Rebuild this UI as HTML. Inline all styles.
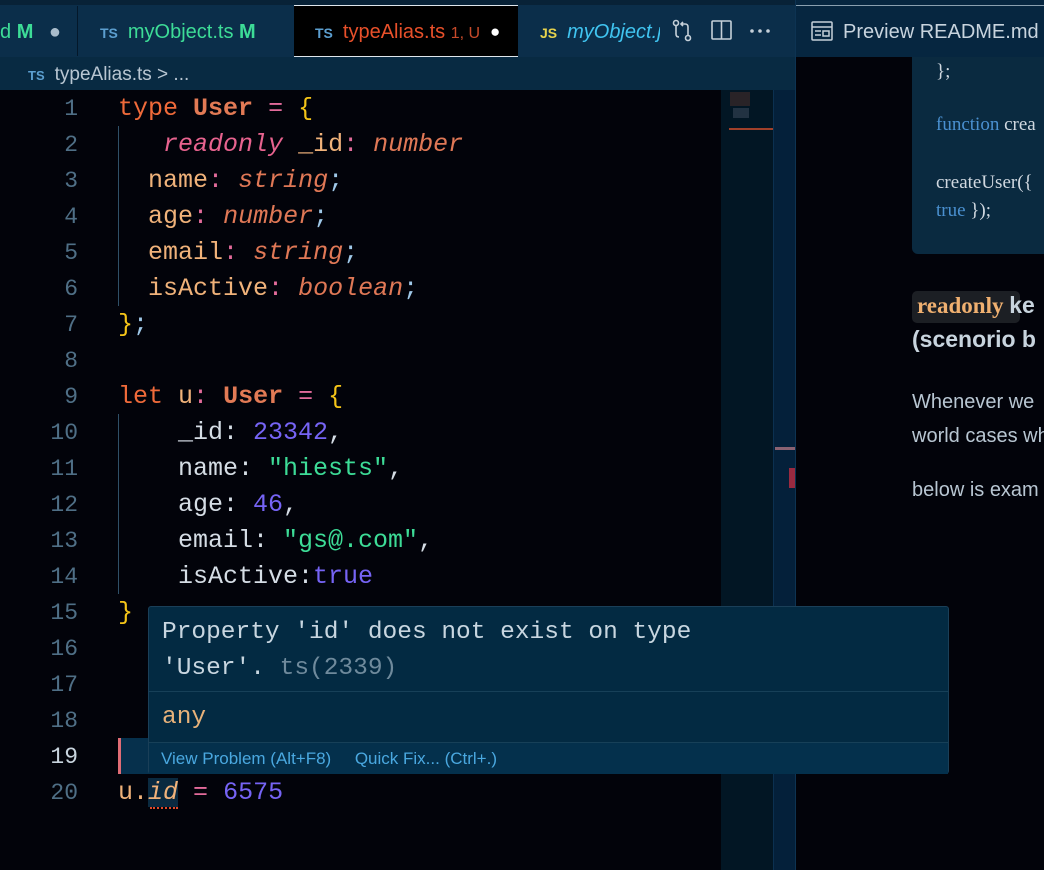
<!DOCTYPE html>
<html><head><meta charset="utf-8"><style>
*{margin:0;padding:0;box-sizing:border-box}
body{width:1044px;height:870px;overflow:hidden;background:#02030a;position:relative;font-family:"Liberation Sans",sans-serif}
.abs{position:absolute}
.code{font-family:"Liberation Mono",monospace;font-size:25px;white-space:pre;position:absolute;left:118px;height:36px;line-height:38px}
.ln{font-family:"Liberation Mono",monospace;font-size:23px;position:absolute;left:30px;width:48px;text-align:right;color:#4f6f86;line-height:38px}
.k{color:#ef6a3a}.t{color:#e27a55;font-weight:bold}.o{color:#e36b9b}.b{color:#f5c518}.p{color:#f0b27a}.ty{color:#e07856;font-style:italic}.w{color:#d5dde5}.n{color:#7664f5}.s{color:#3ddc97}.ro{color:#e8638f;font-style:italic}.sc{color:#9fc8e8}
.tab{position:absolute;top:6px;height:50px;line-height:52px;font-size:20px}
.tsi{font-size:14px;font-weight:bold;color:#5c9fd0;margin-right:10px}
</style></head><body>
<div class="abs" style="left:0;top:0;width:796px;height:57px;background:#0b2e4a"></div>
<div class="abs" style="left:0;top:0;width:796px;height:5px;background:#082237"></div>
<div class="tab" style="left:0;color:#3ddc97">d <b>M</b> <span style="color:#a9bccb;margin-left:10px">●</span></div>
<div class="abs" style="left:77px;top:6px;width:1px;height:50px;background:#04182a"></div>
<div class="tab" style="left:100px;color:#3ddc97"><span class="tsi">TS</span>myObject.ts <b>M</b></div>
<div class="abs" style="left:294px;top:5px;width:224px;height:52px;background:#000;border-top:1px solid #dfe6ec;border-bottom:1px solid #dfe6ec"></div>
<div class="tab" style="left:315px;color:#e8502a"><span class="tsi">TS</span>typeAlias.ts <span style="font-size:16px;color:#c84a2a">1, U</span></div>
<div class="tab" style="left:490px;color:#fff;font-size:17px">●</div>
<div class="tab" style="left:540px;color:#40c4f0;font-style:italic;width:120px;overflow:hidden;white-space:nowrap"><span style="font-size:14px;font-weight:bold;color:#e8d44d;font-style:normal;margin-right:10px">JS</span>myObject.js</div>
<svg class="abs" style="left:670px;top:18px" width="100" height="26" viewBox="0 0 100 26" fill="none" stroke="#c5d0d9" stroke-width="1.6">
<circle cx="6" cy="5" r="2.5"/><circle cx="18" cy="20" r="2.5"/><path d="M6 8v8c0 2 1 3 3 3"/><path d="M18 17V9c0-2-1-3-3-3h-4M13 4l-2 2 2 2"/>
<rect x="42" y="3" width="19" height="18" rx="1"/><path d="M51.5 3v18"/>
<circle cx="82" cy="13" r="1" fill="#c5d0d9"/><circle cx="90" cy="13" r="1" fill="#c5d0d9"/><circle cx="98" cy="13" r="1" fill="#c5d0d9"/>
</svg>
<div class="abs" style="left:0;top:57px;width:796px;height:33px;background:#082a42;color:#b8c6d2;font-size:19px;line-height:35px;padding-left:28px"><span class="tsi" style="font-size:13px">TS</span>typeAlias.ts &gt; ...</div>
<div class="abs" style="left:721px;top:90px;width:52px;height:780px;background:#021624"></div>
<div class="abs" style="left:773px;top:90px;width:22px;height:780px;background:#04203a;border-left:1px solid #0b3050"></div>
<div class="abs" style="left:729px;top:128px;width:44px;height:2px;background:#a0402a"></div>
<div class="abs" style="left:730px;top:92px;width:20px;height:14px;background:#3a2a2a;opacity:.7"></div>
<div class="abs" style="left:733px;top:108px;width:16px;height:10px;background:#2a3a4a;opacity:.8"></div>
<div class="abs" style="left:775px;top:447px;width:20px;height:3px;background:#8a6272"></div>
<div class="abs" style="left:789px;top:468px;width:6px;height:20px;background:#9a2a40"></div>
<div class="abs" style="left:795px;top:0;width:1px;height:870px;background:#0d3352"></div>
<div class="abs" style="left:118px;top:126px;width:1px;height:180px;background:#2f5068"></div>
<div class="abs" style="left:118px;top:414px;width:1px;height:180px;background:#2f5068"></div>
<div class="abs" style="left:118px;top:738px;width:603px;height:36px;background:#06304c;border-left:3px solid #e06c75"></div>
<div class="ln" style="top:90px">1</div><div class="ln" style="top:126px">2</div><div class="ln" style="top:162px">3</div><div class="ln" style="top:198px">4</div><div class="ln" style="top:234px">5</div><div class="ln" style="top:270px">6</div><div class="ln" style="top:306px">7</div><div class="ln" style="top:342px">8</div><div class="ln" style="top:378px">9</div><div class="ln" style="top:414px">10</div><div class="ln" style="top:450px">11</div><div class="ln" style="top:486px">12</div><div class="ln" style="top:522px">13</div><div class="ln" style="top:558px">14</div><div class="ln" style="top:594px">15</div><div class="ln" style="top:630px">16</div><div class="ln" style="top:666px">17</div><div class="ln" style="top:702px">18</div><div class="ln" style="top:738px;color:#c8d4de">19</div><div class="ln" style="top:774px">20</div>
<div class="code" style="top:90px"><span class="k">type</span> <span class="t">User</span> <span class="o">=</span> <span class="b">{</span></div>
<div class="code" style="top:126px">   <span class="ro">readonly</span> <span class="p">_id</span><span class="o">:</span> <span class="ty">number</span></div>
<div class="code" style="top:162px">  <span class="p">name</span><span class="o">:</span> <span class="ty">string</span><span class="sc">;</span></div>
<div class="code" style="top:198px">  <span class="p">age</span><span class="o">:</span> <span class="ty">number</span><span class="sc">;</span></div>
<div class="code" style="top:234px">  <span class="p">email</span><span class="o">:</span> <span class="ty">string</span><span class="sc">;</span></div>
<div class="code" style="top:270px">  <span class="p">isActive</span><span class="o">:</span> <span class="ty">boolean</span><span class="sc">;</span></div>
<div class="code" style="top:306px"><span class="b">}</span><span class="sc">;</span></div>
<div class="code" style="top:378px"><span class="k">let</span> <span class="p">u</span><span class="o">:</span> <span class="t">User</span> <span class="o">=</span> <span class="b">{</span></div>
<div class="code w" style="top:414px">    _id: <span class="n">23342</span>,</div>
<div class="code w" style="top:450px">    name: <span class="s">"hiests"</span>,</div>
<div class="code w" style="top:486px">    age: <span class="n">46</span>,</div>
<div class="code w" style="top:522px">    email: <span class="s">"gs@.com"</span>,</div>
<div class="code w" style="top:558px">    isActive:<span class="n">true</span></div>
<div class="code" style="top:594px"><span class="b">}</span></div>
<div class="code" style="top:774px"><span class="p">u.</span><span class="p" style="font-style:italic;background:#0a2a40">id</span> <span class="o">=</span> <span class="n">6575</span></div>
<div class="abs" style="left:150px;top:807px;width:28px;height:3px;border-top:2px dotted #e04a2a"></div>
<div class="abs" style="left:148px;top:606px;width:801px;height:168px;background:#032a42;border:1px solid #1a3f58;border-radius:3px">
<div style="font-family:'Liberation Mono',monospace;font-size:24.5px;color:#c8d6e0;line-height:36px;padding:8px 0 0 13px">Property 'id' does not exist on type<br>'User'. <span style="color:#6f8a9c">ts(2339)</span></div>
<div class="abs" style="left:0;top:84px;width:799px;height:1px;background:#174058"></div>
<div class="abs" style="left:13px;top:93px;font-family:'Liberation Mono',monospace;font-size:24.5px;color:#e8b27a;line-height:36px">any</div>
<div class="abs" style="left:0;top:135px;width:799px;height:32px;background:#04304c;border-top:1px solid #174058;color:#4aa8e0;font-size:17px;line-height:31px;padding-left:12px">View Problem (Alt+F8)&nbsp;&nbsp;&nbsp;&nbsp;&nbsp;Quick Fix... (Ctrl+.)</div>
</div>
<div class="abs" style="left:796px;top:0;width:248px;height:57px;background:#062640"></div>
<div class="abs" style="left:796px;top:5px;width:248px;height:1px;background:#8aa0b0"></div>
<svg class="abs" style="left:811px;top:21px" width="22" height="20" viewBox="0 0 22 20" fill="none" stroke="#c5d0d9" stroke-width="1.5"><rect x="1" y="1" width="20" height="18" rx="1"/><path d="M1 6h20M4 10h6M4 14h6"/><rect x="12" y="10" width="6" height="5"/></svg>
<div class="abs" style="left:843px;top:6px;height:50px;line-height:52px;color:#c8d4de;font-size:20px;white-space:nowrap">Preview README.md <span style="color:#7f8f9c">×</span></div>
<div class="abs" style="left:912px;top:57px;width:140px;height:197px;background:#0a2a40;border-radius:0 0 0 6px;font-family:'Liberation Serif',serif;font-size:19px;color:#d0d8e0;padding-left:24px">
<div style="position:absolute;top:4px;left:24px">};</div>
<div style="position:absolute;top:57px;left:24px;white-space:nowrap"><span style="color:#4a90d0">function</span> crea</div>
<div style="position:absolute;top:115px;left:24px;white-space:nowrap">createUser({</div>
<div style="position:absolute;top:143px;left:24px;white-space:nowrap"><span style="color:#4a90d0">true</span> });</div>
</div>
<div class="abs" style="left:912px;top:291px;width:108px;height:32px;background:#1c1f24;border-radius:5px"></div>
<div class="abs" style="left:917px;top:292px;font-family:'Liberation Serif',serif;font-weight:bold;font-size:23px;color:#f0b070;white-space:nowrap">readonly <span style="font-family:'Liberation Sans',sans-serif;color:#c8d4de;font-size:23px">ke</span></div>
<div class="abs" style="left:912px;top:326px;font-weight:bold;font-size:23px;color:#c8d4de;white-space:nowrap">(scenorio b</div>
<div class="abs" style="left:912px;top:385px;font-size:20px;color:#b8c6d2;white-space:nowrap;line-height:34px">Whenever we<br>world cases wh</div>
<div class="abs" style="left:912px;top:479px;font-size:20px;color:#b8c6d2;white-space:nowrap">below is exam</div>
</body></html>
